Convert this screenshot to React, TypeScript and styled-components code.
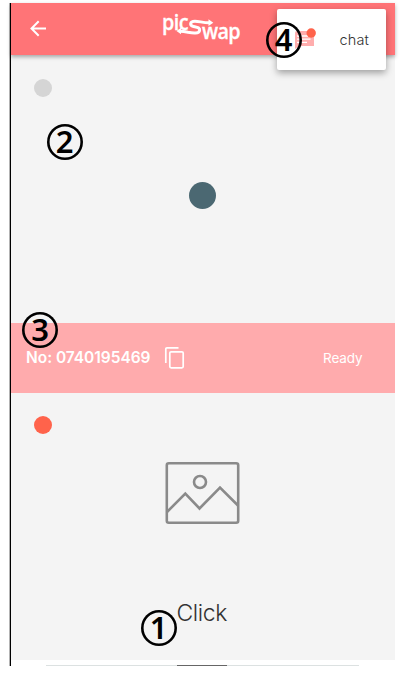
import React from "react";
import styled, { createGlobalStyle } from "styled-components";

const GlobalStyle = createGlobalStyle`
  * { box-sizing: border-box; }
  body { margin: 0; background: #fff; font-family: Inter, "Liberation Sans", sans-serif; }
`;

const Page = styled.div`
  position: relative;
  width: 407px;
  height: 674px;
  overflow: hidden;
  padding: 3px 12.5px 0 9.5px;
`;

const Screen = styled.main`
  display: flex;
  flex-direction: column;
  height: 663px;
  border-left: 1.5px solid #000;
  box-shadow: -0.5px 0 0 #666;
`;

const Header = styled.header`
  position: relative;
  z-index: 1;
  display: flex;
  flex: 0 0 52px;
  align-items: center;
  padding-left: 19px;
  background: #ff7477;
  box-shadow: 0 2px 4px rgba(0, 0, 0, 0.32);
`;

const BackButton = styled.button`
  display: flex;
  width: 17px;
  height: 17px;
  margin: 0;
  padding: 0;
  border: 0;
  background: none;
  transform: translateY(-1px);
`;

const Logo = styled.div`
  position: relative;
  width: 80px;
  height: 34px;
  margin-left: 115px;
  transform: translateY(-3px);
`;

const LogoWord = styled.span<{ $x: number; $y: number; $spacing: number }>`
  position: absolute;
  left: ${(p) => p.$x}px;
  top: ${(p) => p.$y}px;
  color: #fff;
  font: 600 22px/24px "Open Sans", sans-serif;
  -webkit-text-stroke: 0.3px #fff;
  letter-spacing: ${(p) => p.$spacing}px;
  transform: scaleX(0.9);
  transform-origin: left;
`;

const LogoSwap = styled.svg`
  position: absolute;
  left: 14px;
  top: 5px;
`;

const Pane = styled.section<{ $height: number }>`
  display: flex;
  flex: 0 0 ${(p) => p.$height}px;
  flex-direction: column;
  background: #f4f4f4;
`;

const Dot = styled.span<{ $size: number; $color: string; $left: number; $top: number }>`
  flex: none;
  width: ${(p) => p.$size}px;
  height: ${(p) => p.$size}px;
  margin: ${(p) => p.$top}px 0 0 ${(p) => p.$left}px;
  border-radius: 50%;
  background: ${(p) => p.$color};
`;

const InfoBar = styled.section`
  display: flex;
  flex: 0 0 70px;
  align-items: center;
  padding: 0 32px 0 15.5px;
  background: #ffabad;
  color: #fff;
`;

const RoomNumber = styled.strong`
  width: 137.5px;
  font-size: 15.5px;
  line-height: 20px;
  font-weight: 600;
  letter-spacing: -0.03px;
  white-space: nowrap;
`;

const Ready = styled.span`
  margin-left: auto;
  font-size: 13.5px;
  font-weight: 400;
  letter-spacing: -0.1px;
  transform: translateY(-0.5px);
`;

const Picture = styled.svg`
  display: block;
  margin: 28px 0 0 154px;
`;

const ClickLabel = styled.span`
  margin: 73px 0 0 166px;
  color: #333;
  font-size: 23px;
  line-height: 30px;
  font-weight: 300;
  letter-spacing: -0.4px;
`;

const ScrollTrack = styled.div`
  display: flex;
  justify-content: center;
  width: 313px;
  height: 1px;
  margin: 5px 0 0 35px;
  background: #dce1e1;
`;

const ScrollThumb = styled.div`
  width: 50px;
  height: 1px;
  margin-right: 1px;
  background: #666;
`;

const ChatMenu = styled.div`
  position: absolute;
  z-index: 2;
  left: 277px;
  top: 9px;
  display: flex;
  align-items: center;
  width: 109px;
  height: 61px;
  padding-left: 17px;
  border-radius: 2px;
  background: #fff;
  box-shadow: 0 3px 7px rgba(0, 0, 0, 0.35);
`;

const ChatLabel = styled.span`
  margin-left: 21.5px;
  color: #333;
  font-size: 14.5px;
  font-weight: 300;
  letter-spacing: 0.15px;
`;

const ChatIcon = styled.svg`
  transform: translateY(-1px);
`;

const Marker = styled.span<{ $x: number; $y: number }>`
  position: absolute;
  z-index: 3;
  left: ${(p) => p.$x}px;
  top: ${(p) => p.$y}px;
  display: flex;
  align-items: center;
  justify-content: center;
  width: 36px;
  height: 36px;
  padding-bottom: 2px;
  border-radius: 50%;
  box-shadow: inset 0 0 0 2.6px #000;
  color: #000;
  font: 600 31px/32px "Noto Sans", "Open Sans", sans-serif;
`;

export default function App() {
  return (
    <Page>
      <GlobalStyle />
      <Screen>
        <Header>
          <BackButton aria-label="Back">
            <svg width="17" height="17" viewBox="0 0 17 17" fill="none" stroke="#fff" strokeWidth="2">
              <path d="M16 8.5H2M8.7 1.3L1.5 8.5l7.2 7.2" />
            </svg>
          </BackButton>
          <Logo>
            <LogoWord $x={0} $y={0} $spacing={-0.6}>pic</LogoWord>
            <LogoWord $x={40.5} $y={9} $spacing={-0.8}>wap</LogoWord>
            <LogoSwap width="39" height="23" viewBox="0 0 39 23" fill="none" stroke="#fff">
              <path d="M33 8.8C27 8.8 23 7.2 19 7.2C13.5 7.2 13.5 11.5 17.5 12.5C21 13.3 24.2 13.6 23.6 16.4C23 19.8 17 19.3 12 18.3C9 17.6 7 17.2 4 17.2" strokeWidth="3" />
              <path d="M32.5 5.2L37.3 8.8L32.5 12ZM5 13.8L.5 17.1L5 20.3Z" fill="#fff" stroke="none" />
            </LogoSwap>
          </Logo>
        </Header>
        <Pane $height={268}>
          <Dot $size={18} $color="#d5d5d5" $left={23} $top={24} />
          <Dot $size={27} $color="#4b6872" $left={178} $top={85} />
        </Pane>
        <InfoBar>
          <RoomNumber>No: 0740195469</RoomNumber>
          <svg width="21" height="24" viewBox="0 0 21 24" fill="none" stroke="#fff" strokeWidth="1.7">
            <path d="M1.8 17V3Q1.8 1.8 3 1.8H14.5" />
            <rect x="5.8" y="5.8" width="13.4" height="16" rx="1.3" />
          </svg>
          <Ready>Ready</Ready>
        </InfoBar>
        <Pane $height={267}>
          <Dot $size={18} $color="#ff634b" $left={23} $top={23} />
          <Picture width="75" height="63" viewBox="0 0 75 63" fill="none" stroke="#8a8a8a" strokeWidth="2.6">
            <rect x="1.8" y="1.3" width="71.4" height="59.4" rx="2" />
            <circle cx="35" cy="20" r="6" />
            <path d="M2 50L20.3 31.5L34.5 46.5L55 25.5L73 43.5" />
          </Picture>
          <ClickLabel>Click</ClickLabel>
        </Pane>
        <ScrollTrack><ScrollThumb /></ScrollTrack>
      </Screen>
      <ChatMenu>
        <ChatIcon width="24" height="22" viewBox="0 0 24 22">
          <path d="M1 5Q1 3 3 3H18Q20 3 20 5V18H5L1 21Z" fill="#ffadad" />
          <path d="M3 8H16.5M3 11.2H16.5M3 14.4H13" stroke="#fff" strokeWidth="1.3" />
          <circle cx="17.2" cy="5" r="4.7" fill="#ff634b" />
        </ChatIcon>
        <ChatLabel>chat</ChatLabel>
      </ChatMenu>
      <Marker $x={265.5} $y={21.5}>4</Marker>
      <Marker $x={46.5} $y={123.5}>2</Marker>
      <Marker $x={22} $y={311.5}>3</Marker>
      <Marker $x={140.5} $y={609.5}>1</Marker>
    </Page>
  );
}
